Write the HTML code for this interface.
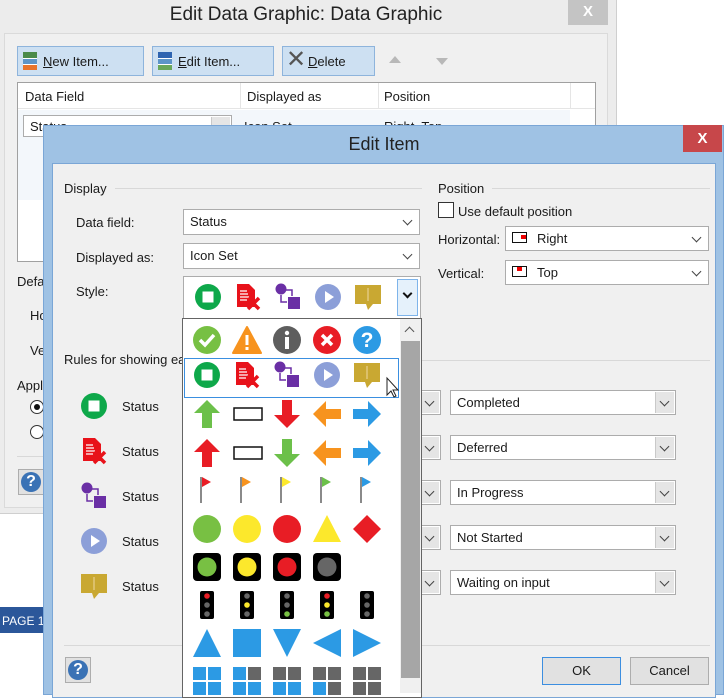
<!DOCTYPE html>
<html><head><meta charset="utf-8"><style>
*{box-sizing:border-box}
body{margin:0;width:728px;height:693px;overflow:hidden;background:#fff;font-family:"Liberation Sans",sans-serif;font-size:13px;color:#1a1a1a;position:relative}
.a{position:absolute}
.sel{position:absolute;background:#fff;border:1px solid #acacac;padding:4px 0 0 6px;font-size:13px;white-space:nowrap}
.dd{position:absolute;top:1px;right:1px;bottom:1px;width:19px;background:#e5e5e5;border-left:1px solid #c9c9c9}
.dd:after{content:"";position:absolute;left:5px;top:6px;width:6px;height:6px;border-right:1.5px solid #444;border-bottom:1.5px solid #444;transform:rotate(45deg)}
.btn{position:absolute;background:#cde0f2;border:1px solid #8eb4dc;font-size:13px;padding:7px 0 0 0}
.hl{position:absolute;height:1px;background:#d8d8d8}
.help{position:absolute;width:26px;height:26px;border:1px solid #adadad;background:#e1e1e1}
.help b{position:absolute;left:2px;top:2px;width:20px;height:20px;border-radius:50%;background:#3a72b5;color:#fff;font-size:16px;text-align:center;line-height:20px}
</style></head><body>
<svg width="0" height="0" style="position:absolute">
<defs>
<symbol id="stop" viewBox="0 0 28 28"><circle cx="14" cy="14" r="13" fill="#0ea84a"/><rect x="8.5" y="8.5" width="11" height="11" fill="#fff"/></symbol>
<symbol id="doc" viewBox="0 0 28 28"><path d="M3 1h12l6 6v17H3z" fill="#e8121a"/><path d="M6 8h7M6 11h8M6 14h9M6 17h7" stroke="#fff" stroke-width="1.3"/><path d="M14 15l11 11M25 15L14 26" stroke="#e8121a" stroke-width="3.5"/></symbol>
<symbol id="flow" viewBox="0 0 28 28"><circle cx="7" cy="6" r="5.5" fill="#6a2fa5"/><rect x="14" y="14" width="12" height="12" fill="#6a2fa5"/><path d="M12 7h6v6M7 12v7h6" stroke="#6a2fa5" stroke-width="1.5" fill="none"/></symbol>
<symbol id="play" viewBox="0 0 28 28"><circle cx="14" cy="14" r="13" fill="#8c9fd8"/><path d="M11 8l9 6-9 6z" fill="#fff"/></symbol>
<symbol id="call" viewBox="0 0 28 28"><rect x="1" y="2" width="26" height="19" fill="#c9a832"/><path d="M12 21l2 6 5-6z" fill="#c9a832"/><path d="M14 5v13" stroke="#dcc06a" stroke-width="2"/></symbol>
</defs></svg>

<!-- back dialog -->
<div class="a" style="left:0;top:0;width:617px;height:514px;background:#ececec;border-right:1px solid #cfcfcf;border-bottom:1px solid #cfcfcf"></div>
<div class="a" style="left:568px;top:0;width:40px;height:25px;background:#c4c4c4;color:#fff;font-size:15px;font-weight:bold;text-align:center;line-height:24px">X</div>
<div class="a" style="left:0;top:4px;width:612px;text-align:center;font-size:19px;color:#222">Edit Data Graphic: Data Graphic</div>
<div class="a" style="left:4px;top:33px;width:604px;height:475px;border:1px solid #dadada;background:#f0f0f0"></div>
<div class="btn" style="left:17px;top:46px;width:127px;height:30px;padding-left:25px"><span style="position:absolute;left:5px;top:5px;width:14px;height:18px;background:linear-gradient(#4a8a4a 0 33%,#fff 33% 40%,#5d95c8 40% 66%,#fff 66% 73%,#e8742c 73%)"></span><u>N</u>ew Item...</div>
<div class="btn" style="left:152px;top:46px;width:122px;height:30px;padding-left:25px"><span style="position:absolute;left:5px;top:5px;width:14px;height:18px;background:linear-gradient(#2f64b0 0 33%,#fff 33% 40%,#5d95c8 40% 66%,#fff 66% 73%,#6aa85a 73%)"></span><u>E</u>dit Item...</div>
<div class="btn" style="left:282px;top:46px;width:93px;height:30px;padding-left:25px"><span style="position:absolute;left:3px;top:1px;font-size:24px;color:#555;line-height:24px">✕</span><u>D</u>elete</div>
<div class="a" style="left:389px;top:56px;border:6px solid transparent;border-bottom:7px solid #b8b8b8;border-top:0"></div>
<div class="a" style="left:436px;top:58px;border:6px solid transparent;border-top:7px solid #b8b8b8;border-bottom:0"></div>
<div class="a" style="left:17px;top:82px;width:579px;height:180px;border:1px solid #a0a0a0;background:#fff"></div>
<div class="a" style="left:18px;top:83px;width:577px;height:26px;background:#fff;border-bottom:1px solid #e5e5e5"></div>
<div class="a" style="left:240px;top:83px;width:1px;height:26px;background:#e5e5e5"></div>
<div class="a" style="left:378px;top:83px;width:1px;height:26px;background:#e5e5e5"></div>
<div class="a" style="left:570px;top:83px;width:1px;height:26px;background:#e5e5e5"></div>
<div class="a" style="left:25px;top:89px">Data Field</div>
<div class="a" style="left:247px;top:89px">Displayed as</div>
<div class="a" style="left:384px;top:89px">Position</div>
<div class="a" style="left:18px;top:110px;width:552px;height:90px;background:#f3f7fb"></div>
<div class="sel" style="left:23px;top:115px;width:209px;height:22px;padding-top:3px">Status<div class="dd"></div></div>
<div class="a" style="left:244px;top:119px">Icon Set</div>
<div class="a" style="left:384px;top:119px">Right, Top</div>
<div class="a" style="left:17px;top:274px">Defa</div>
<div class="a" style="left:30px;top:308px">Ho</div>
<div class="a" style="left:30px;top:343px">Ve</div>
<div class="a" style="left:17px;top:378px">Appl</div>
<div class="a" style="left:30px;top:400px;width:14px;height:14px;border-radius:50%;border:1px solid #333;background:#fff"><div style="margin:3px;width:6px;height:6px;border-radius:50%;background:#111"></div></div>
<div class="a" style="left:30px;top:425px;width:14px;height:14px;border-radius:50%;border:1px solid #333;background:#fff"></div>
<div class="hl" style="left:17px;top:456px;width:30px"></div>
<div class="help" style="left:18px;top:469px"><b>?</b></div>
<div class="a" style="left:0;top:607px;width:44px;height:26px;background:#2b579a;color:#fff;font-size:12px;padding:7px 0 0 2px;white-space:nowrap;overflow:hidden">PAGE 1</div>

<!-- front dialog -->
<div class="a" style="left:43px;top:125px;width:681px;height:570px;background:#9fc2e4;border:1px solid #7aa6d6"></div>
<div class="a" style="left:683px;top:125px;width:39px;height:27px;background:#c7474a;color:#fff;font-size:15px;font-weight:bold;text-align:center;line-height:27px">X</div>
<div class="a" style="left:52px;top:134px;width:664px;text-align:center;font-size:18px;color:#222">Edit Item</div>
<div class="a" style="left:52px;top:163px;width:664px;height:535px;background:#f0f0f0;border:1px solid #7aa6d6"></div>

<div class="a" style="left:64px;top:181px">Display</div>
<div class="hl" style="left:115px;top:188px;width:307px"></div>
<div class="a" style="left:76px;top:215px">Data field:</div>
<div class="sel" style="left:183px;top:209px;width:237px;height:26px">Status<div class="dd" style="background:#fff;border-left:none"></div></div>
<div class="a" style="left:76px;top:250px">Displayed as:</div>
<div class="sel" style="left:183px;top:243px;width:237px;height:26px">Icon Set<div class="dd" style="background:#fff;border-left:none"></div></div>
<div class="a" style="left:76px;top:284px">Style:</div>
<div class="sel" style="left:183px;top:276px;width:238px;height:43px"></div>
<div class="a" style="left:397px;top:279px;width:21px;height:37px;background:#e5f1fb;border:1px solid #7eb4ea"></div>
<div class="a" style="left:404px;top:290px;width:7px;height:7px;border-right:2px solid #111;border-bottom:2px solid #111;transform:rotate(45deg)"></div>
<svg class="a" style="left:194px;top:283px" width="200" height="30"><use href="#stop" x="0" y="0" width="28" height="28"/><use href="#doc" x="40" y="0" width="28" height="28"/><use href="#flow" x="80" y="0" width="28" height="28"/><use href="#play" x="120" y="0" width="28" height="28"/><use href="#call" x="160" y="0" width="28" height="28"/></svg>

<div class="a" style="left:438px;top:181px">Position</div>
<div class="hl" style="left:492px;top:188px;width:218px"></div>
<div class="a" style="left:438px;top:202px;width:16px;height:16px;border:1px solid #333;background:#fff"></div>
<div class="a" style="left:458px;top:204px">Use default position</div>
<div class="a" style="left:438px;top:232px">Horizontal:</div>
<div class="sel" style="left:505px;top:226px;width:204px;height:25px;padding-left:31px">Right<div class="dd" style="background:#fff;border-left:none"></div></div>
<div class="a" style="left:512px;top:232px;width:15px;height:11px;border:1.5px solid #111"><div style="position:absolute;right:0;top:2px;width:5px;height:4px;background:#e00"></div></div>
<div class="a" style="left:438px;top:266px">Vertical:</div>
<div class="sel" style="left:505px;top:260px;width:204px;height:25px;padding-left:31px">Top<div class="dd" style="background:#fff;border-left:none"></div></div>
<div class="a" style="left:512px;top:266px;width:15px;height:11px;border:1.5px solid #111"><div style="position:absolute;left:4px;top:0;width:5px;height:4px;background:#e00"></div></div>

<div class="hl" style="left:64px;top:360px;width:646px"></div>
<div class="a" style="left:64px;top:352px;background:#f0f0f0;padding-right:2px">Rules for showing ea</div>
<svg class="a" style="left:80px;top:392px" width="30" height="210"><use href="#stop" x="0" y="0" width="28" height="28"/><use href="#doc" x="0" y="45" width="28" height="28"/><use href="#flow" x="0" y="90" width="28" height="28"/><use href="#play" x="0" y="135" width="28" height="28"/><use href="#call" x="0" y="180" width="28" height="28"/></svg>
<div class="a" style="left:122px;top:399px">Status</div>
<div class="a" style="left:122px;top:444px">Status</div>
<div class="a" style="left:122px;top:489px">Status</div>
<div class="a" style="left:122px;top:534px">Status</div>
<div class="a" style="left:122px;top:579px">Status</div>

<div class="sel" style="left:410px;top:390px;width:31px;height:25px"><div class="dd"></div></div>
<div class="sel" style="left:410px;top:435px;width:31px;height:25px"><div class="dd"></div></div>
<div class="sel" style="left:410px;top:480px;width:31px;height:25px"><div class="dd"></div></div>
<div class="sel" style="left:410px;top:525px;width:31px;height:25px"><div class="dd"></div></div>
<div class="sel" style="left:410px;top:570px;width:31px;height:25px"><div class="dd"></div></div>
<div class="sel" style="left:450px;top:390px;width:226px;height:25px">Completed<div class="dd"></div></div>
<div class="sel" style="left:450px;top:435px;width:226px;height:25px">Deferred<div class="dd"></div></div>
<div class="sel" style="left:450px;top:480px;width:226px;height:25px">In Progress<div class="dd"></div></div>
<div class="sel" style="left:450px;top:525px;width:226px;height:25px">Not Started<div class="dd"></div></div>
<div class="sel" style="left:450px;top:570px;width:226px;height:25px">Waiting on input<div class="dd"></div></div>

<div class="hl" style="left:64px;top:645px;width:646px"></div>
<div class="help" style="left:65px;top:657px"><b>?</b></div>
<div class="a" style="left:542px;top:657px;width:79px;height:28px;border:1px solid #3c8ee0;background:#e1e1e1;text-align:center;line-height:26px">OK</div>
<div class="a" style="left:630px;top:657px;width:79px;height:28px;border:1px solid #adadad;background:#e1e1e1;text-align:center;line-height:26px">Cancel</div>

<!-- dropdown list -->
<div class="a" style="left:182px;top:318px;width:240px;height:380px;background:#fff;border:1px solid #646464"></div>
<div class="a" style="left:400px;top:319px;width:21px;height:374px;background:#f0f0f0"></div>
<div class="a" style="left:401px;top:341px;width:19px;height:337px;background:#a6a6a6"></div>
<div class="a" style="left:406px;top:328px;width:7px;height:7px;border-left:1.5px solid #555;border-top:1.5px solid #555;transform:rotate(45deg)"></div>
<div class="a" style="left:184px;top:358px;width:215px;height:40px;border:1.5px solid #3a8fe0"></div>
<svg class="a" style="left:182px;top:318px" width="218" height="380" viewBox="0 0 218 380">
<g transform="translate(11,8)"><circle cx="14" cy="14" r="14" fill="#77c043"/><path d="M7 14l5 5 9-10" stroke="#fff" stroke-width="3.5" fill="none"/></g>
<g transform="translate(51,8)"><path d="M14 1L28 27H0z" fill="#f7931e" stroke="#f7931e" stroke-linejoin="round" stroke-width="2"/><rect x="12.5" y="9" width="3" height="10" fill="#fff"/><rect x="12.5" y="21" width="3" height="3" fill="#fff"/></g>
<g transform="translate(91,8)"><circle cx="14" cy="14" r="14" fill="#5e5e5e"/><circle cx="14" cy="7" r="2.2" fill="#fff"/><rect x="12" y="11" width="4" height="12" fill="#fff"/></g>
<g transform="translate(131,8)"><circle cx="14" cy="14" r="14" fill="#e81d25"/><path d="M9 9l10 10M19 9L9 19" stroke="#fff" stroke-width="3.5"/></g>
<g transform="translate(171,8)"><circle cx="14" cy="14" r="14" fill="#2c9ae4"/><text x="14" y="21" font-size="21" font-weight="bold" fill="#fff" text-anchor="middle" font-family="Liberation Sans">?</text></g>
<use href="#stop" x="11" y="43" width="28" height="28"/><use href="#doc" x="51" y="43" width="28" height="28"/><use href="#flow" x="91" y="43" width="28" height="28"/><use href="#play" x="131" y="43" width="28" height="28"/><use href="#call" x="171" y="43" width="28" height="28"/>
<path d="M205 60v17l4-4 3 6 2-1-3-6h5z" fill="#fff" stroke="#222" stroke-width="1"/>
<g transform="translate(11,82)"><path d="M14 0L27 13H19V28H9V13H1z" fill="#6cc04a"/></g>
<rect x="52" y="90" width="28" height="12" fill="#fff" stroke="#111" stroke-width="1.5"/>
<g transform="translate(91,82)"><path d="M14 28L27 15H19V0H9V15H1z" fill="#e81d25"/></g>
<g transform="translate(131,82)"><path d="M0 14L13 1V9H28V19H13V27z" fill="#f7931e"/></g>
<g transform="translate(171,82)"><path d="M28 14L15 1V9H0V19H15V27z" fill="#2c9ae4"/></g>
<g transform="translate(11,121)"><path d="M14 0L27 13H19V28H9V13H1z" fill="#e81d25"/></g>
<rect x="52" y="129" width="28" height="12" fill="#fff" stroke="#111" stroke-width="1.5"/>
<g transform="translate(91,121)"><path d="M14 28L27 15H19V0H9V15H1z" fill="#6cc04a"/></g>
<g transform="translate(131,121)"><path d="M0 14L13 1V9H28V19H13V27z" fill="#f7931e"/></g>
<g transform="translate(171,121)"><path d="M28 14L15 1V9H0V19H15V27z" fill="#2c9ae4"/></g>
<g fill="none"><path d="M19 159v26M59 159v26M99 159v26M139 159v26M179 159v26" stroke="#8a8a8a" stroke-width="2"/></g>
<path d="M20 159l9 5-9 5z" fill="#e81d25"/><path d="M60 159l9 5-9 5z" fill="#f7931e"/><path d="M100 159l9 5-9 5z" fill="#fce82c"/><path d="M140 159l9 5-9 5z" fill="#6cc04a"/><path d="M180 159l9 5-9 5z" fill="#2c9ae4"/>
<circle cx="25" cy="211" r="14" fill="#78c043"/><circle cx="65" cy="211" r="14" fill="#fce82c"/><circle cx="105" cy="211" r="14" fill="#e81d25"/>
<path d="M145 197L159 224H131z" fill="#fce82c"/><path d="M185 197L199 211 185 225 171 211z" fill="#e81d25"/>
<rect x="11" y="235" width="28" height="28" rx="4" fill="#000"/><circle cx="25" cy="249" r="9.5" fill="#78c043"/>
<rect x="51" y="235" width="28" height="28" rx="4" fill="#000"/><circle cx="65" cy="249" r="9.5" fill="#fce82c"/>
<rect x="91" y="235" width="28" height="28" rx="4" fill="#000"/><circle cx="105" cy="249" r="9.5" fill="#e81d25"/>
<rect x="131" y="235" width="28" height="28" rx="4" fill="#000"/><circle cx="145" cy="249" r="9.5" fill="#666"/>
<g>
<rect x="18" y="273" width="14" height="28" rx="2" fill="#000"/><circle cx="25" cy="278" r="2.8" fill="#e81d25"/><circle cx="25" cy="287" r="2.8" fill="#666"/><circle cx="25" cy="296" r="2.8" fill="#666"/>
<rect x="58" y="273" width="14" height="28" rx="2" fill="#000"/><circle cx="65" cy="278" r="2.8" fill="#666"/><circle cx="65" cy="287" r="2.8" fill="#fce82c"/><circle cx="65" cy="296" r="2.8" fill="#666"/>
<rect x="98" y="273" width="14" height="28" rx="2" fill="#000"/><circle cx="105" cy="278" r="2.8" fill="#666"/><circle cx="105" cy="287" r="2.8" fill="#666"/><circle cx="105" cy="296" r="2.8" fill="#78c043"/>
<rect x="138" y="273" width="14" height="28" rx="2" fill="#000"/><circle cx="145" cy="278" r="2.8" fill="#e81d25"/><circle cx="145" cy="287" r="2.8" fill="#fce82c"/><circle cx="145" cy="296" r="2.8" fill="#78c043"/>
<rect x="178" y="273" width="14" height="28" rx="2" fill="#000"/><circle cx="185" cy="278" r="2.8" fill="#666"/><circle cx="185" cy="287" r="2.8" fill="#666"/><circle cx="185" cy="296" r="2.8" fill="#666"/>
</g>
<path d="M25 311L39 339H11z" fill="#2c9ae4"/><rect x="51" y="311" width="28" height="28" fill="#2c9ae4"/><path d="M91 311H119L105 339z" fill="#2c9ae4"/><path d="M131 325L159 311V339z" fill="#2c9ae4"/><path d="M171 311L199 325 171 339z" fill="#2c9ae4"/>
<g>
<rect x="11" y="349" width="13" height="13" fill="#2c9ae4"/><rect x="26" y="349" width="13" height="13" fill="#2c9ae4"/><rect x="11" y="364" width="13" height="13" fill="#2c9ae4"/><rect x="26" y="364" width="13" height="13" fill="#2c9ae4"/>
<rect x="51" y="349" width="13" height="13" fill="#2c9ae4"/><rect x="66" y="349" width="13" height="13" fill="#666"/><rect x="51" y="364" width="13" height="13" fill="#2c9ae4"/><rect x="66" y="364" width="13" height="13" fill="#2c9ae4"/>
<rect x="91" y="349" width="13" height="13" fill="#666"/><rect x="106" y="349" width="13" height="13" fill="#666"/><rect x="91" y="364" width="13" height="13" fill="#2c9ae4"/><rect x="106" y="364" width="13" height="13" fill="#2c9ae4"/>
<rect x="131" y="349" width="13" height="13" fill="#666"/><rect x="146" y="349" width="13" height="13" fill="#666"/><rect x="131" y="364" width="13" height="13" fill="#2c9ae4"/><rect x="146" y="364" width="13" height="13" fill="#666"/>
<rect x="171" y="349" width="13" height="13" fill="#666"/><rect x="186" y="349" width="13" height="13" fill="#666"/><rect x="171" y="364" width="13" height="13" fill="#666"/><rect x="186" y="364" width="13" height="13" fill="#666"/>
</g>
</svg>
</body></html>
